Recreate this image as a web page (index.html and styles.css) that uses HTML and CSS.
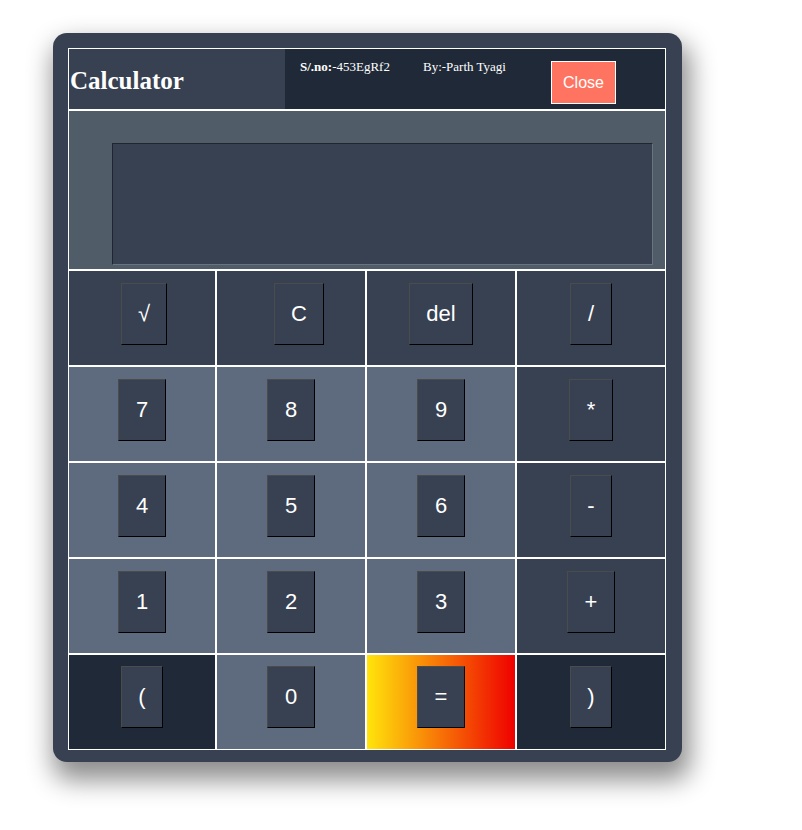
FILE: index.html
```html
<!DOCTYPE html>
<html>
<head>
<meta charset="utf-8">
<title>Calculator</title>
<link rel="stylesheet" href="styles.css">
</head>
<body>
<div class="page">
<div class="calc">
  <div class="table">
    <div class="header">
      <div class="title">Calculator</div>
      <div class="info">
        <span class="serial"><b>S/.no:</b>-453EgRf2</span>
        <span class="author">By:-Parth Tyagi</span>
        <button class="close">Close</button>
      </div>
    </div>
    <div class="display"><div class="screen"></div></div>
    <div class="keys">
      <div class="cell fn"><button class="key key-root">√</button></div>
      <div class="cell fn"><button class="key key-c">C</button></div>
      <div class="cell fn"><button class="key">del</button></div>
      <div class="cell fn"><button class="key">/</button></div>

      <div class="cell num"><button class="key">7</button></div>
      <div class="cell num"><button class="key">8</button></div>
      <div class="cell num"><button class="key">9</button></div>
      <div class="cell fn"><button class="key">*</button></div>

      <div class="cell num"><button class="key">4</button></div>
      <div class="cell num"><button class="key">5</button></div>
      <div class="cell num"><button class="key">6</button></div>
      <div class="cell fn"><button class="key">-</button></div>

      <div class="cell num"><button class="key">1</button></div>
      <div class="cell num"><button class="key">2</button></div>
      <div class="cell num"><button class="key">3</button></div>
      <div class="cell fn"><button class="key">+</button></div>

      <div class="cell dark last"><button class="key">(</button></div>
      <div class="cell num last"><button class="key">0</button></div>
      <div class="cell equals last"><button class="key">=</button></div>
      <div class="cell dark last"><button class="key">)</button></div>
    </div>
  </div>
</div>
</div>
</body>
</html>
```
FILE: styles.css
```css
html, body {
  margin: 0;
  padding: 0;
  background: #ffffff;
}

.page {
  min-height: 830px;
  padding: 33px 0 0 53px;
  box-sizing: border-box;
}

.calc {
  width: 598px;
  padding: 15px 16px 12px 15px;
  background: #374151;
  border-radius: 14px;
  box-shadow: 4px 14px 26px 4px rgba(0, 0, 0, 0.45);
}

.table {
  background: #ffffff;
  padding: 1px;
  display: grid;
  grid-template-rows: 60px 158px 478px;
  row-gap: 2px;
}

.header {
  display: flex;
}

.title {
  width: 216px;
  background: #374151;
  color: #ffffff;
  font-family: "Liberation Serif", "Times New Roman", serif;
  font-weight: bold;
  font-size: 25px;
  display: flex;
  align-items: center;
  padding: 4px 0 0 1px;
  box-sizing: border-box;
}

.info {
  flex: 1;
  background: #1f2937;
  display: flex;
  align-items: flex-start;
  padding-left: 15px;
  color: #ffffff;
  font-family: "Liberation Serif", "Times New Roman", serif;
  font-size: 13px;
}

.serial {
  width: 123px;
  margin-top: 10px;
}

.author {
  width: 128px;
  margin-top: 10px;
}

.close {
  margin-top: 12px;
  width: 65px;
  height: 43px;
  background: #ff7461;
  border: 1px solid #ffffff;
  color: #ffffff;
  font-family: "Liberation Sans", Arial, sans-serif;
  font-size: 16px;
  padding: 0;
}

.display {
  background: #505c68;
  padding: 32px 12px 0 43px;
}

.screen {
  height: 120px;
  background: #374151;
  border: 1px solid;
  border-color: #1f2630 #6b7280 #6b7280 #1f2630;
}

.keys {
  display: grid;
  grid-template-columns: 146px 148px 148px 148px;
  grid-template-rows: repeat(5, 94px);
  gap: 2px;
}

.cell {
  display: flex;
  justify-content: center;
  align-items: flex-start;
  padding-top: 12px;
  box-sizing: border-box;
}

.cell.last {
  padding-top: 11px;
}

.fn {
  background: #374151;
}

.num {
  background: #5e6b7e;
}

.dark {
  background: #1f2937;
}

.equals {
  background: linear-gradient(to right, #ffe40c, #ef0000);
}

.key {
  height: 62px;
  padding: 0 16.5px;
  background: #374151;
  color: #ffffff;
  font-family: "Liberation Sans", Arial, sans-serif;
  font-size: 22px;
  border: 1px solid;
  border-color: #4b4b4b #000000 #000000 #4b4b4b;
}

.key-c {
  margin-left: 16px;
}

.key-root {
  padding: 0 15.5px;
  margin-left: 4px;
}
```
